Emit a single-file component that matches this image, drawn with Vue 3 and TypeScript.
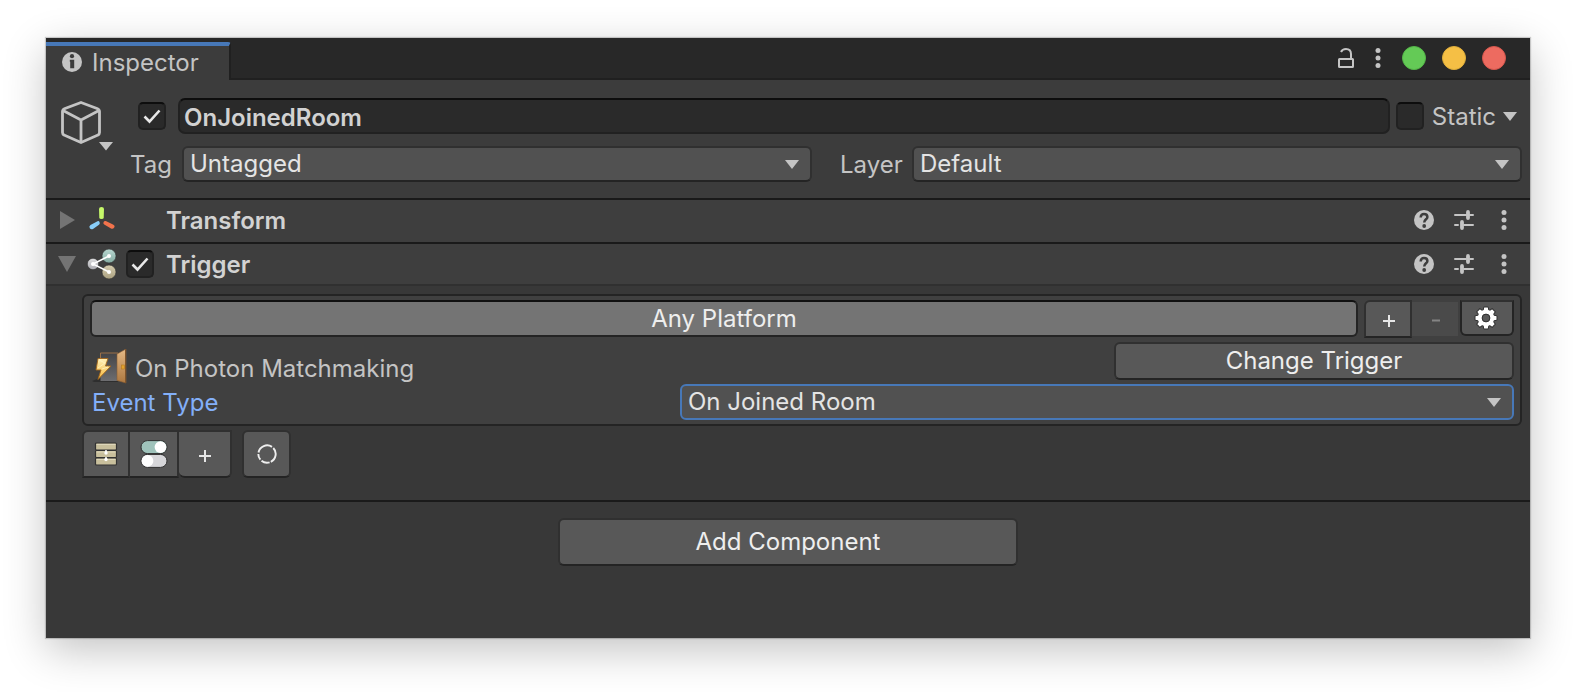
<script setup lang="ts">
import { ref } from 'vue'

interface Section {
  title: string
  open: boolean
  kind: 'transform' | 'trigger'
}

const objectName = ref('OnJoinedRoom')
const objectActive = ref(true)
const isStatic = ref(false)
const tag = ref('Untagged')
const layer = ref('Default')
const triggerEnabled = ref(true)
const eventType = ref('On Joined Room')

const sections = ref<Section[]>([
  { title: 'Transform', open: false, kind: 'transform' },
  { title: 'Trigger', open: true, kind: 'trigger' },
])

const windowDots = [
  { name: 'Zoom', cls: 'green' },
  { name: 'Minimize', cls: 'yellow' },
  { name: 'Close', cls: 'red' },
]
</script>

<template>
  <div class="page">
    <main class="window">
      <header class="tabbar">
        <button class="tab" type="button">
          <svg width="20" height="20" viewBox="0 0 20 20" aria-hidden="true">
            <circle cx="10" cy="10" r="10" fill="#c4c4c4" />
            <circle cx="10" cy="4.200" r="2.100" fill="#3c3c3c" />
            <path d="M7.800 7.800H12.200v8.400H8.200V9.800h-.4z" fill="#3c3c3c" />
          </svg>
          <span>Inspector</span>
        </button>
        <div class="window-tools">
          <button class="plain" type="button" aria-label="Lock">
            <svg width="20" height="20" viewBox="0 0 20 20" fill="none" stroke="#c4c4c4" stroke-width="2">
              <rect x="3" y="11" width="14" height="8" rx=".5" />
              <path d="M5 4C6 1.800 8 1 10 1c3 0 5 2 5 5v5" />
            </svg>
          </button>
          <button class="plain dots" type="button" aria-label="Tab menu">
            <svg width="6" height="20" viewBox="0 0 6 20" fill="#c4c4c4">
              <circle cx="3" cy="2.500" r="2.500" /><circle cx="3" cy="10" r="2.500" /><circle cx="3" cy="17.500" r="2.500" />
            </svg>
          </button>
          <button v-for="d in windowDots" :key="d.name" class="dot" :class="d.cls" type="button" :aria-label="d.name"></button>
        </div>
      </header>

      <section class="object">
        <button class="plain cube" type="button" aria-label="Object icon">
          <svg width="54" height="50" viewBox="0 0 54 50" fill="none" stroke="#c4c4c4" stroke-width="2.800" stroke-linejoin="round">
            <path d="M20 1.500 36 7.500 Q38.500 8.500 38.500 10.500V31.500Q38.500 33 37 34L20 41.500 3 34Q1.500 33 1.500 31.500V10.500Q1.500 8.500 4 7.500Z" />
            <path d="M2 9.500 20 19 38 9.500M20 19V41" />
            <path d="M38 41H52L45 49.500Z" fill="#c4c4c4" stroke="none" />
          </svg>
        </button>
        <div class="object-fields">
          <div class="name-row">
            <input v-model="objectActive" class="check" type="checkbox" aria-label="Active" />
            <input v-model="objectName" class="name" type="text" aria-label="Name" />
            <label class="static">
              <input v-model="isStatic" class="check" type="checkbox" />
              <span>Static</span>
            </label>
            <button class="plain" type="button" aria-label="Static options">
              <svg width="14" height="9" viewBox="0 0 14 9"><path d="M0 0H14L7 9Z" fill="#c4c4c4" /></svg>
            </button>
          </div>
          <div class="select-row">
            <div class="pair">
              <label for="tag">Tag</label>
              <div class="drop">
                <select id="tag" v-model="tag"><option>Untagged</option></select>
                <svg class="arrow" width="14" height="9" viewBox="0 0 14 9"><path d="M0 0H14L7 9Z" fill="#c4c4c4" /></svg>
              </div>
            </div>
            <div class="pair layer">
              <label for="layer">Layer</label>
              <div class="drop">
                <select id="layer" v-model="layer"><option>Default</option></select>
                <svg class="arrow" width="14" height="9" viewBox="0 0 14 9"><path d="M0 0H14L7 9Z" fill="#c4c4c4" /></svg>
              </div>
            </div>
          </div>
        </div>
      </section>

      <header v-for="s in sections" :key="s.title" class="component" :class="{ open: s.open }">
        <button class="plain fold" type="button" :aria-label="'Toggle ' + s.title" @click="s.open = !s.open">
          <svg width="18" height="18" viewBox="0 0 18 18" fill="#747474">
            <path v-if="s.open" d="M0 1H18L9 17Z" />
            <path v-else d="M2 0 17 9 2 18Z" />
          </svg>
        </button>
        <svg v-if="s.kind === 'transform'" class="kind" width="30" height="30" viewBox="0 0 30 30" aria-hidden="true">
          <path d="M12 4Q12 2 14.500 2T17 4L16.700 13Q16.500 14 14.500 14T12.300 13Z" fill="#c6f86a" />
          <path d="M3.500 20 10.500 16.200Q12 15.700 12.600 17.300T12 19.800L6 24Q4 25 2.800 23.200T3.500 20Z" fill="#88cdf8" />
          <path d="M26 19.500 18.800 16Q17.300 15.500 16.600 17T17.200 19.600L24 23.500Q26 24.300 27.200 22.500T26 19.500Z" fill="#f2734c" />
        </svg>
        <svg v-else class="kind" width="30" height="30" viewBox="0 0 30 30" aria-hidden="true">
          <defs>
            <linearGradient id="nodeGray" x1="0" y1="0" x2="0" y2="1"><stop offset="0" stop-color="#dededf" /><stop offset="1" stop-color="#aaaab0" /></linearGradient>
            <linearGradient id="nodeTeal" x1="0" y1="0" x2="0" y2="1"><stop offset="0" stop-color="#b9d8d1" /><stop offset="1" stop-color="#83aaa1" /></linearGradient>
            <linearGradient id="nodeSand" x1="0" y1="0" x2="0" y2="1"><stop offset="0" stop-color="#d6cdb0" /><stop offset="1" stop-color="#aaa080" /></linearGradient>
          </defs>
          <g stroke="#2c2c2c" stroke-width=".6">
            <circle cx="6" cy="15" r="5.700" fill="url(#nodeGray)" />
            <circle cx="22" cy="7" r="7" fill="url(#nodeTeal)" />
            <circle cx="22" cy="23" r="7" fill="url(#nodeSand)" />
          </g>
          <path d="M22 7 6 15 22 23" fill="none" stroke="#fff" stroke-width="1.500" />
          <g fill="#fff"><circle cx="6" cy="15" r="2" /><circle cx="22" cy="7" r="2" /><circle cx="22" cy="23" r="2" /></g>
        </svg>
        <span class="enable">
          <input v-if="s.kind === 'trigger'" v-model="triggerEnabled" class="check" type="checkbox" aria-label="Trigger enabled" />
        </span>
        <h2>{{ s.title }}</h2>
        <div class="component-tools">
          <button class="plain" type="button" aria-label="Help">
            <svg width="20" height="20" viewBox="0 0 20 20">
              <circle cx="10" cy="10" r="10" fill="#c4c4c4" />
              <path d="M6.700 7.500C6.700 5 8 3.900 10 3.900s3.400 1.200 3.400 3C13.400 9.300 10.200 9.400 10.200 12.600" fill="none" stroke="#3e3e3e" stroke-width="2.500" />
              <circle cx="10.200" cy="16" r="1.900" fill="#3e3e3e" />
            </svg>
          </button>
          <button class="plain" type="button" aria-label="Presets">
            <svg width="20" height="20" viewBox="0 0 20 20" fill="none" stroke="#c4c4c4" stroke-linecap="round">
              <path d="M1 5H12M16 5H19M1 15H4M10 15H19" stroke-width="2" />
              <path d="M14 2V8M8 12V18" stroke-width="3.800" />
            </svg>
          </button>
          <button class="plain" type="button" aria-label="Component menu">
            <svg width="20" height="20" viewBox="0 0 20 20" fill="#c4c4c4">
              <circle cx="10" cy="2.500" r="2.500" /><circle cx="10" cy="10" r="2.500" /><circle cx="10" cy="17.500" r="2.500" />
            </svg>
          </button>
        </div>
      </header>

      <section class="body">
        <div class="box">
          <div class="platform-row">
            <button class="platform" type="button">Any Platform</button>
            <div class="group">
              <button class="seg first" type="button" aria-label="Add platform">
                <svg width="14" height="14" viewBox="0 0 14 14"><path d="M1 7H13M7 1V13" stroke="#e6e6e6" stroke-width="2" /></svg>
              </button>
              <button class="seg off" type="button" disabled aria-label="Remove platform">
                <svg width="14" height="14" viewBox="0 0 14 14"><path d="M3 6.500H11" stroke="#848484" stroke-width="2" /></svg>
              </button>
              <button class="seg last" type="button" aria-label="Settings">
                <svg width="26" height="26" viewBox="-13 -13 26 26">
                  <circle r="8.500" fill="#303030" />
                  <g v-for="a in 8" :key="a" :transform="`rotate(${a * 45})`">
                    <path d="M-3.200 -6 -2.200 -11H2.200L3.200 -6Z" fill="#fff" stroke="#303030" stroke-width="1" />
                  </g>
                  <circle r="6" fill="none" stroke="#fff" stroke-width="4.500" />
                  <circle r="3.900" fill="#585858" stroke="#303030" stroke-width="1" />
                </svg>
              </button>
            </div>
          </div>
          <div class="trigger-row">
            <svg width="35" height="35" viewBox="0 0 35 35" aria-hidden="true">
              <defs>
                <linearGradient id="doorFace" x1="0" y1="0" x2="0" y2="1"><stop offset="0" stop-color="#e5b985" /><stop offset="1" stop-color="#ad7840" /></linearGradient>
                <linearGradient id="doorway" x1="0" y1="0" x2="0" y2="1"><stop offset="0" stop-color="#444446" /><stop offset="1" stop-color="#6d6d70" /></linearGradient>
                <linearGradient id="bolt" x1="0" y1="0" x2="0" y2="1"><stop offset="0" stop-color="#fff0b8" /><stop offset="1" stop-color="#f6b73c" /></linearGradient>
              </defs>
              <path d="M0 32 8 29H26V33H2Z" fill="#2e2e2e" />
              <path d="M8.500 32V4H26V32Z" fill="url(#doorway)" />
              <path d="M8.500 12V4H26" fill="none" stroke="#9b7048" />
              <path d="M25 5 34 0V34L25 31.500Z" fill="url(#doorFace)" stroke="#8b5e33" stroke-width=".6" />
              <path d="M33.500 0V34" stroke="#80542b" stroke-width="1" />
              <rect x="29.500" y="16" width="3" height="4" fill="#e3a22e" stroke="#b57a1f" stroke-width=".6" />
              <path d="M6 9.500H16L13.500 17H19L6 30.500 9 21H4Z" fill="url(#bolt)" stroke="#a3661c" stroke-width=".9" />
              <path d="M7 11 13 14 6 19M10 20 16 18" fill="none" stroke="#fff3c4" stroke-width=".8" />
            </svg>
            <span class="trigger-name">On Photon Matchmaking</span>
            <button class="btn change" type="button">Change Trigger</button>
          </div>
          <div class="event-row">
            <label for="event">Event Type</label>
            <div class="drop focused">
              <select id="event" v-model="eventType"><option>On Joined Room</option></select>
              <svg class="arrow" width="14" height="9" viewBox="0 0 14 9"><path d="M0 0H14L7 9Z" fill="#c4c4c4" /></svg>
            </div>
          </div>
        </div>

        <div class="actions">
          <div class="group">
            <button class="tool a" type="button" aria-label="Conditions">
              <svg width="24" height="24" viewBox="0 0 24 24">
                <g fill="#c8bf9c" stroke="#333" stroke-width="1.200">
                  <rect x="1.500" y="1" width="21" height="7" rx="1" />
                  <rect x="1.500" y="8.500" width="21" height="7" rx="1" />
                  <rect x="1.500" y="16" width="21" height="7" rx="1" />
                </g>
                <path d="M2.500 2.500H21.500M2.500 10H21.500M2.500 17.500H21.500" stroke="#ddd6ba" />
                <path d="M12 8V11M12 15V18" stroke="#fff" stroke-width="1.500" />
                <circle cx="12" cy="11" r="1.700" fill="#fff" /><circle cx="12" cy="17.500" r="1.700" fill="#fff" />
              </svg>
            </button>
            <button class="tool b" type="button" aria-label="Actions">
              <svg width="28" height="28" viewBox="0 0 28 28" stroke="#303030">
                <rect x="1" y=".6" width="26" height="13" rx="6.500" fill="#9fc3bb" />
                <rect x="1" y="14.400" width="26" height="13" rx="6.500" fill="#d7d7da" />
                <circle cx="20.500" cy="7.100" r="5.900" fill="#fff" stroke="none" />
                <circle cx="7.500" cy="20.900" r="5.900" fill="#fff" stroke="none" />
              </svg>
            </button>
            <button class="tool c" type="button" aria-label="Add">
              <svg width="14" height="14" viewBox="0 0 14 14"><path d="M1 7H13M7 1V13" stroke="#e6e6e6" stroke-width="2" /></svg>
            </button>
          </div>
          <button class="btn cycle" type="button" aria-label="Refresh">
            <svg width="20" height="20" viewBox="-10 -10 20 20" fill="none" stroke="#eee" stroke-width="1.900">
              <path d="M-8.500 -1.500A8.700 8.700 0 0 1 5 -7.100" />
              <path d="M6.300 -6A8.700 8.700 0 0 1 3.800 7.800" />
              <path d="M2.600 8.300A8.700 8.700 0 0 1 -5.500 6.700" />
              <path d="M-6.600 5.700A8.700 8.700 0 0 1 -8.700 0" />
            </svg>
          </button>
        </div>
      </section>

      <footer class="add">
        <button class="btn add-btn" type="button">Add Component</button>
      </footer>
    </main>
  </div>
</template>

<style>
body {
  margin: 0;
  background: #fff;
}
</style>

<style scoped>
.page {
  box-sizing: border-box;
  display: flex;
  min-height: 100vh;
  padding: 38px 46px 54px;
  font: 24px/30px Inter, "Liberation Sans", sans-serif;
  color: #c4c4c4;
}
.page * {
  box-sizing: border-box;
}
.window {
  flex: 1;
  min-width: 0;
  background: #383838;
  box-shadow: 0 0 1px 1px rgba(0, 0, 0, 0.18), 0 12px 40px rgba(0, 0, 0, 0.24);
}
button, input, select {
  margin: 0;
  font: inherit;
  color: inherit;
}
button {
  display: flex;
  align-items: center;
  justify-content: center;
  padding: 0;
}
svg {
  display: block;
  flex: none;
}
.plain {
  border: 0;
  background: none;
}
.tabbar {
  display: flex;
  justify-content: space-between;
  height: 42px;
  background: #282828;
  box-shadow: inset 0 -2px #202020;
}
.tab {
  gap: 10px;
  width: 185px;
  height: 38px;
  margin-top: 4px;
  padding: 0 0 2px 16px;
  justify-content: flex-start;
  border: 0;
  border-top: 4px solid #4778b8;
  border-right: 2px solid #202020;
  border-radius: 0 3px 0 0;
  background: #3c3c3c;
}
.tab span {
  padding-top: 2px;
}
.window-tools {
  display: flex;
  align-items: center;
  gap: 16px;
  height: 40px;
  padding-right: 24px;
}
.dots {
  width: 12px;
}
.dot {
  width: 24px;
  height: 24px;
  border-radius: 50%;
}
.dots + .dot {
  margin-left: 2px;
}
.green {
  border: 1px solid #54b648;
  background: #64ca56;
}
.yellow {
  border: 1px solid #dfae3a;
  background: #f5bf45;
}
.red {
  border: 1px solid #d7574d;
  background: #ed6b60;
}
.object {
  display: flex;
  gap: 15px;
  padding: 18px 8px 16px 15px;
  background: #3c3c3c;
}
.cube {
  height: 50px;
  margin-top: 3px;
}
.object-fields {
  flex: 1;
  min-width: 0;
}
.name-row {
  display: flex;
  align-items: center;
  height: 36px;
  padding: 0 5px 0 8px;
}
.check {
  flex: none;
  width: 28px;
  height: 28px;
  appearance: none;
  border: 2px solid #212121;
  border-top-color: #0d0d0d;
  border-radius: 5px;
  background: #2a2a2a;
}
.check:checked {
  background: #2a2a2a url("data:image/svg+xml,%3Csvg xmlns='http://www.w3.org/2000/svg' viewBox='0 0 24 24'%3E%3Cpath d='M4.500 12.500 9.500 17.500 19.500 6.500' fill='none' stroke='%23e8e8e8' stroke-width='2.600'/%3E%3C/svg%3E") center / 24px no-repeat;
}
.name {
  flex: 1;
  min-width: 0;
  height: 36px;
  margin: 0 6px 0 12px;
  padding: 2px 4px 0;
  border: 2px solid #212121;
  border-top-color: #0d0d0d;
  border-radius: 7px;
  background: #2a2a2a;
  color: #d2d2d2;
  font-weight: 600;
}
.static {
  display: flex;
  align-items: center;
  gap: 8px;
  margin-right: 7px;
}
.static span {
  padding-top: 2px;
}
.select-row {
  display: grid;
  grid-template-columns: 1fr 1fr;
  gap: 28px;
  margin-top: 12px;
}
.pair {
  display: grid;
  grid-template-columns: 52px 1fr;
  align-items: center;
}
.pair label {
  padding-top: 2px;
}
.layer {
  grid-template-columns: 72px 1fr;
}
.drop {
  position: relative;
}
.drop select {
  display: block;
  width: 100%;
  height: 36px;
  padding: 0 32px 0 6px;
  appearance: none;
  border: 2px solid #303030;
  border-bottom-color: #242424;
  border-radius: 6px;
  background: #515151;
  color: #e4e4e4;
}
.arrow {
  position: absolute;
  top: 14px;
  right: 13px;
  pointer-events: none;
}
.drop.focused select {
  border-color: #4778b8;
}
.component {
  display: flex;
  align-items: center;
  height: 44px;
  padding: 0 16px 0 12px;
  border-top: 2px solid #1a1a1a;
  background: #3e3e3e;
}
.component.open {
  height: 42px;
}
.component:not(.open) {
  padding-bottom: 2px;
}
.kind {
  margin-left: 11px;
}
.enable {
  width: 28px;
  height: 28px;
  margin: 0 12px 0 9px;
}
.enable .check {
  display: block;
}
h2 {
  flex: 1;
  margin: 0;
  padding-top: 2px;
  font-size: 24px;
  font-weight: 600;
  color: #d2d2d2;
}
.component-tools {
  display: flex;
  gap: 20px;
}
.body {
  padding: 8px 8px 22px 36px;
  border-top: 2px solid #303030;
}
.box {
  padding: 4px 6px;
  border: 2px solid #242424;
  border-radius: 6px;
  background: #404040;
}
.platform-row {
  display: flex;
  gap: 6px;
  height: 38px;
}
.platform {
  flex: 1;
  height: 37px;
  border: 2px solid #242424;
  border-top-color: #101010;
  border-radius: 6px;
  background: #747474;
  color: #eee;
}
.group {
  display: flex;
}
.seg {
  width: 48px;
  height: 38px;
  padding: 4px 0 0 2px;
  border: 2px solid #303030;
  border-bottom-color: #242424;
  background: #585858;
}
.first {
  border-radius: 6px 0 0 0;
}
.off {
  border-color: #404040;
  border-left-width: 0;
  background: #4a4a4a;
}
.last {
  width: 54px;
  height: 36px;
  padding: 0 2px 0 0;
  border-color: #303030 #242424 #242424;
  border-radius: 0 0 6px 6px;
}
.btn {
  border: 2px solid #303030;
  border-bottom-color: #242424;
  border-radius: 6px;
  background: #585858;
  color: #eee;
}
.trigger-row {
  display: flex;
  align-items: flex-end;
  height: 46px;
  padding-left: 2px;
}
.trigger-name {
  flex: 1;
  margin-left: 8px;
}
.change {
  width: 400px;
  height: 38px;
  margin-bottom: 4px;
}
.event-row {
  display: grid;
  grid-template-columns: 590px 1fr;
  align-items: center;
}
.event-row label {
  padding: 2px 0 0 2px;
  color: #83aff8;
}
.actions {
  display: flex;
  gap: 10px;
  margin-top: 4px;
}
.tool {
  height: 48px;
  border: 2px solid #303030;
  border-bottom-color: #242424;
  background: #585858;
}
.a {
  width: 48px;
  border-radius: 6px 0 0 0;
}
.b {
  width: 49px;
  border-left-width: 0;
}
.c {
  width: 53px;
  padding-top: 3px;
  border-left-width: 0;
  border-radius: 0 0 6px 6px;
}
.cycle {
  width: 49px;
  height: 48px;
}
.add {
  display: flex;
  justify-content: center;
  padding: 16px;
  border-top: 2px solid #1a1a1a;
}
.add-btn {
  width: 460px;
  height: 48px;
}
</style>
